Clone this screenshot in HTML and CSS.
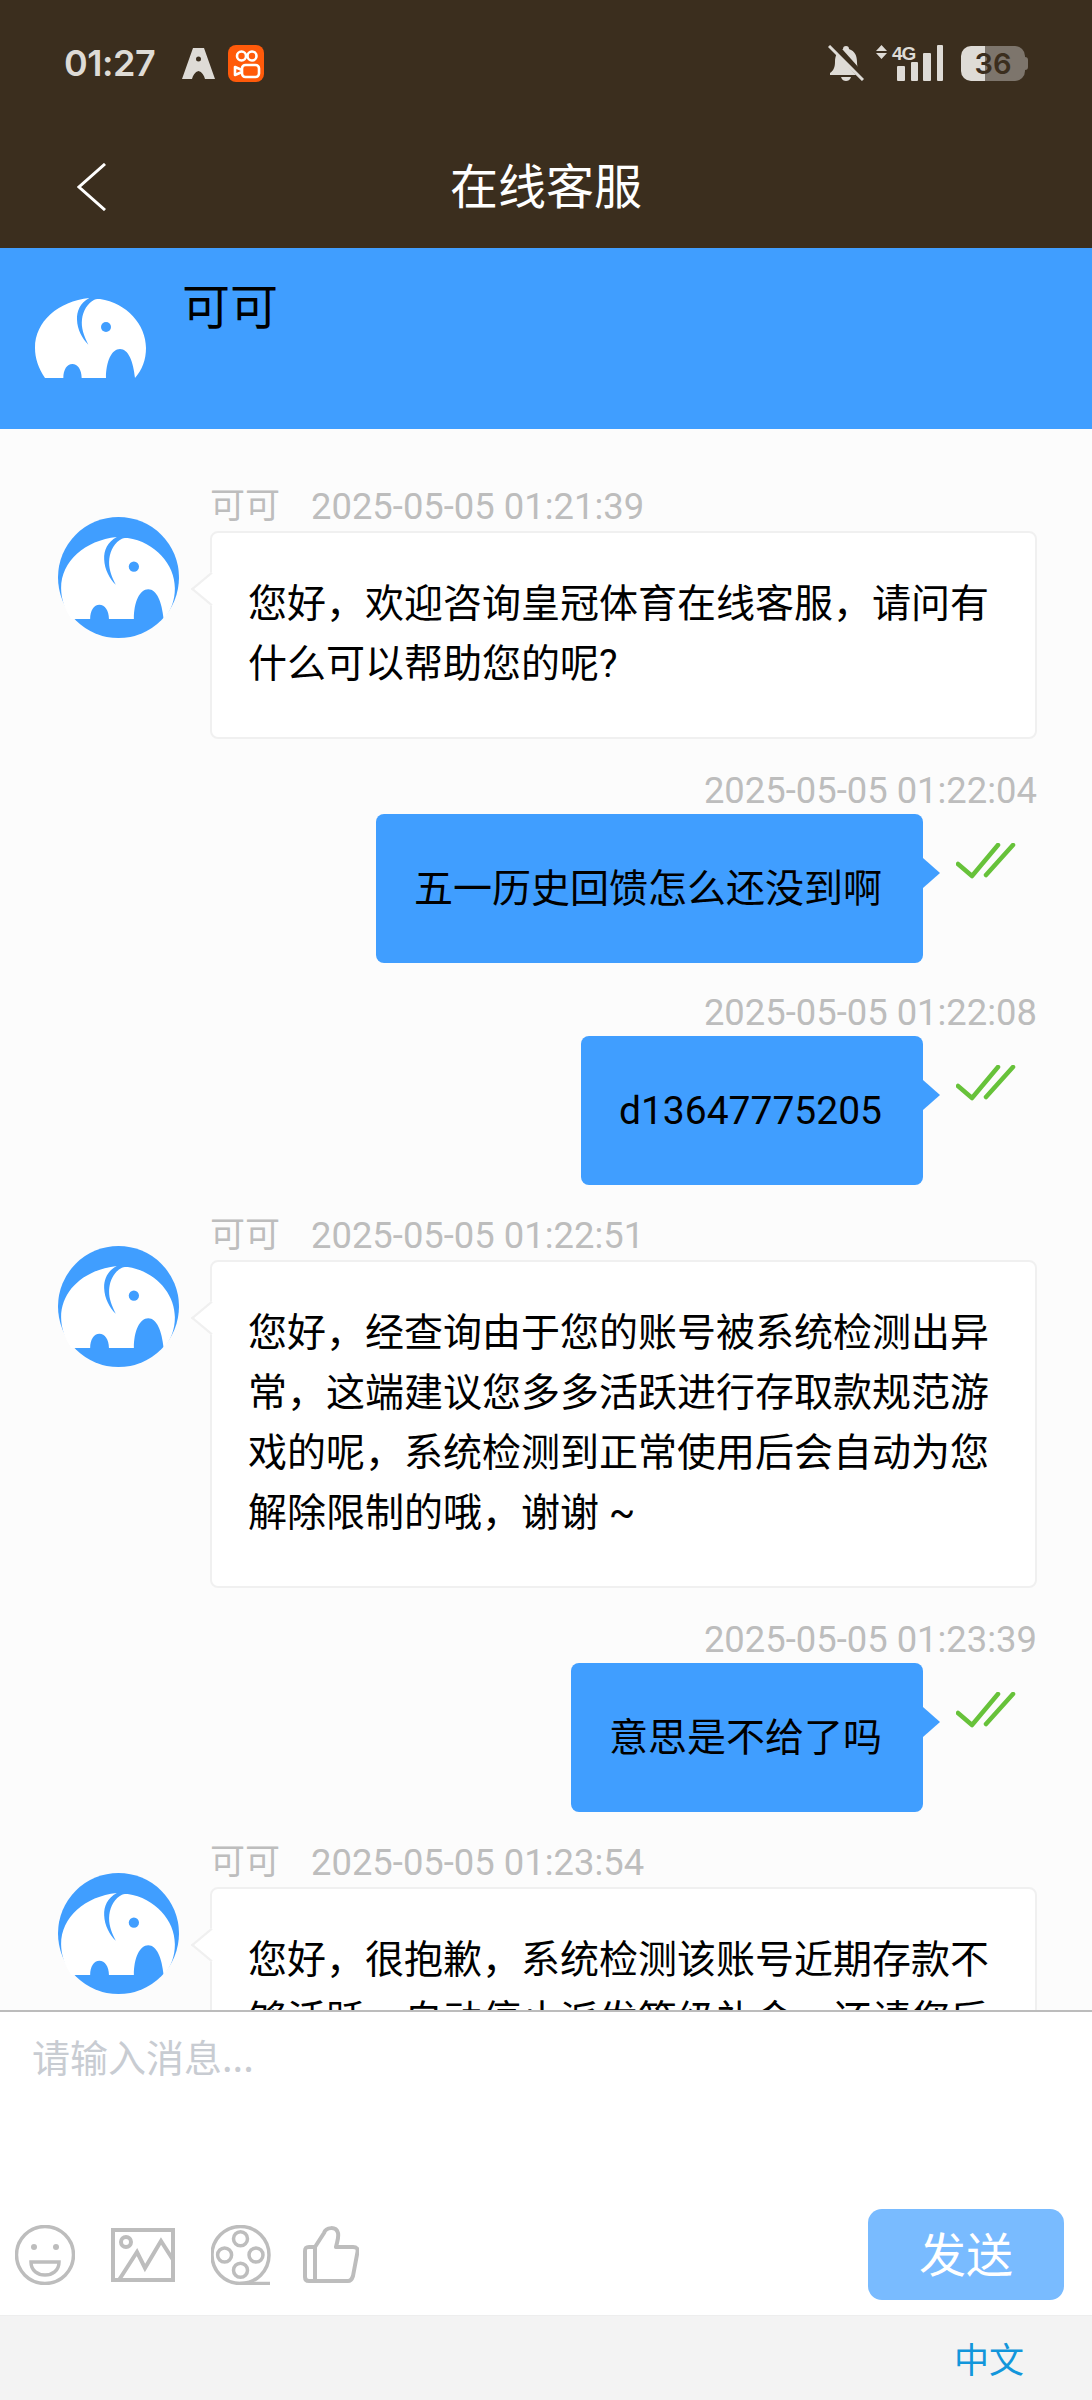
FILE: index.html
```html
<!DOCTYPE html>
<html lang="zh-CN">
<head>
  <meta charset="UTF-8" />
  <meta name="viewport" content="width=device-width, initial-scale=1.0" />
  <title>在线客服</title>
  <link rel="stylesheet" href="styles.css">
</head>
<body>
  <svg class="defs">
    <symbol id="elephant" viewBox="0 0 333 240">
      <path fill="#fff" d="M30 240C10 210 0 180 0 150C0 70 70 10 163 0C135 15 125 40 126 65C127 95 142 122 160 140C146 112 138 90 141 64C144 38 158 15 178 5C184 3 190 3 195 3C275 15 333 80 333 150C333 185 322 215 300 240C295 190 280 153 255 153C230 153 213 190 213 240H140C140 215 128 198 112 198C96 198 85 215 85 240Z"/>
      <circle cx="213" cy="87" r="15" fill="#409eff"/>
    </symbol>
    <symbol id="ticks" viewBox="0 0 60 36">
      <path d="M2 21L16 33L42 2M30 32L57 2" fill="none" stroke="#67c23a" stroke-width="4.5" stroke-linecap="round" stroke-linejoin="round"/>
    </symbol>
  </svg>

  <header class="top">
    <div class="status-bar">
      <div class="status-left">
        <span class="clock">01:27</span>
        <svg class="app-a" viewBox="0 0 33 31"><path fill="#dedbd6" fill-rule="evenodd" d="M11 0H22L33 31H23C22 27 20 24 16.5 23C13 24 11 27 10 31H0ZM16.5 8.500A2.500 2.500 0 1 0 16.500 13.500A2.500 2.500 0 1 0 16.500 8.500Z"/></svg>
        <svg class="app-k" viewBox="0 0 36 37">
          <rect width="36" height="37" rx="8" fill="#ff5a0a"/>
          <g fill="none" stroke="#fff" stroke-width="2.600" stroke-linejoin="round">
            <circle cx="13.500" cy="11" r="4.500"/>
            <circle cx="24" cy="11" r="4.500"/>
            <rect x="14" y="20" width="17" height="12" rx="3.500"/>
            <path d="M14 25L7 22V30L14 27"/>
          </g>
        </svg>
      </div>
      <div class="status-right">
        <svg class="bell" viewBox="0 0 36 36">
          <path fill="#dedbd6" d="M18 1C20 1 21 2 21 4C27 6 29 11 29 17C29 23 31 26 34 28V30H2V28C5 26 7 23 7 17C7 11 9 6 15 4C15 2 16 1 18 1ZM13 32H23C22 35 20 36 18 36C16 36 14 35 13 32Z"/>
          <path d="M4 -2L38 36" stroke="#3b2e1e" stroke-width="7"/>
          <path d="M1 1L35 35" stroke="#dedbd6" stroke-width="3"/>
        </svg>
        <svg class="signal" viewBox="0 -4 67 44">
          <path fill="#dedbd6" d="M5.500 0L11 6H0ZM0 8H11L5.500 14Z"/>
          <text class="net-type" x="16" y="15">4G</text>
          <rect x="21" y="21" width="8" height="15" rx="1"/>
          <rect x="35" y="17" width="7" height="19" rx="1"/>
          <rect x="47" y="8" width="8" height="28" rx="1"/>
          <rect x="61" y="0" width="6" height="36" rx="1"/>
        </svg>
        <div class="battery">36</div>
      </div>
    </div>
    <nav class="nav-bar">
      <svg class="back" viewBox="0 0 29 48"><path d="M28 1L2 24L28 47" fill="none" stroke="#fff" stroke-width="3"/></svg>
      <h1 class="nav-title">在线客服</h1>
    </nav>
  </header>

  <section class="agent-bar">
    <svg class="agent-logo"><use href="#elephant"/></svg>
    <div class="agent-name">可可</div>
  </section>

  <main class="chat">
    <div class="msg msg-left">
      <svg class="avatar" viewBox="0 0 121 121"><circle cx="60.500" cy="60.500" r="60.500" fill="#409eff"/><use href="#elephant" x="3" y="20" width="114" height="82"/></svg>
      <div class="msg-body">
        <div class="meta"><span class="meta-name">可可</span><span>2025-05-05 01:21:39</span></div>
        <div class="bubble">您好，欢迎咨询皇冠体育在线客服，请问有什么可以帮助您的呢?</div>
      </div>
    </div>

    <div class="msg msg-right">
      <div class="meta">2025-05-05 01:22:04</div>
      <div class="bubble-row">
        <div class="bubble">五一历史回馈怎么还没到啊</div>
        <svg class="ticks"><use href="#ticks"/></svg>
      </div>
    </div>

    <div class="msg msg-right">
      <div class="meta">2025-05-05 01:22:08</div>
      <div class="bubble-row">
        <div class="bubble">d13647775205</div>
        <svg class="ticks"><use href="#ticks"/></svg>
      </div>
    </div>

    <div class="msg msg-left">
      <svg class="avatar" viewBox="0 0 121 121"><circle cx="60.500" cy="60.500" r="60.500" fill="#409eff"/><use href="#elephant" x="3" y="20" width="114" height="82"/></svg>
      <div class="msg-body">
        <div class="meta"><span class="meta-name">可可</span><span>2025-05-05 01:22:51</span></div>
        <div class="bubble">您好，经查询由于您的账号被系统检测出异常，这端建议您多多活跃进行存取款规范游戏的呢，系统检测到正常使用后会自动为您解除限制的哦，谢谢 ~</div>
      </div>
    </div>

    <div class="msg msg-right">
      <div class="meta">2025-05-05 01:23:39</div>
      <div class="bubble-row">
        <div class="bubble">意思是不给了吗</div>
        <svg class="ticks"><use href="#ticks"/></svg>
      </div>
    </div>

    <div class="msg msg-left">
      <svg class="avatar" viewBox="0 0 121 121"><circle cx="60.500" cy="60.500" r="60.500" fill="#409eff"/><use href="#elephant" x="3" y="20" width="114" height="82"/></svg>
      <div class="msg-body">
        <div class="meta"><span class="meta-name">可可</span><span>2025-05-05 01:23:54</span></div>
        <div class="bubble">您好，很抱歉，系统检测该账号近期存款不够活跃，自动停止派发等级礼金，还请您后</div>
      </div>
    </div>
  </main>

  <section class="composer">
    <div class="input-box">请输入消息...</div>
    <div class="toolbar">
      <svg class="tool" viewBox="0 0 60 60">
        <circle cx="30" cy="30" r="28.500"/>
        <circle class="dot" cx="19" cy="22" r="3"/>
        <circle class="dot" cx="41" cy="22" r="3"/>
        <path d="M16 37H44C44 46 37 50 30 50C23 50 16 46 16 37Z"/>
      </svg>
      <svg class="tool tool-wide" viewBox="0 0 64 54">
        <rect x="2" y="2" width="60" height="50"/>
        <circle cx="15" cy="14" r="5"/>
        <path d="M8 52L26 24L34 40L50 13L64 35"/>
      </svg>
      <svg class="tool" viewBox="0 0 60 60">
        <circle cx="29.500" cy="30" r="28.500"/>
        <circle cx="29.500" cy="13.700" r="7"/>
        <circle cx="13.600" cy="30" r="7"/>
        <circle cx="45" cy="30" r="7"/>
        <circle cx="29.500" cy="45.300" r="7"/>
        <path d="M29 58.500H59"/>
      </svg>
      <svg class="tool tool-thumb" viewBox="0 0 56 57">
        <path stroke-linejoin="round" d="M12 21L21 7C23 1 33 0 35 7C36 12 34 16 33 21H50C54 21 55 23 54.500 26L50 50C49 53 48 55 45 55H6C3 55 2 53 2 51V25C2 22 3 21 6 21ZM12 21V55"/>
      </svg>
      <button class="send-btn">发送</button>
    </div>
  </section>

  <footer class="lang-bar"><span class="lang">中文</span></footer>
</body>
</html>
```

FILE: styles.css
```css
* {
  margin: 0;
  padding: 0;
  box-sizing: border-box;
}

body {
  width: 1092px;
  height: 2400px;
  overflow: hidden;
  display: flex;
  flex-direction: column;
  font-family: Roboto, "Noto Sans CJK SC", sans-serif;
  background: #fff;
  color: #000;
}

.defs {
  display: none;
}

/* top dark area */
.top {
  background: #3b2e1e;
  height: 248px;
  flex-shrink: 0;
}

.status-bar {
  height: 126px;
  padding: 0 64px;
  display: flex;
  align-items: center;
  justify-content: space-between;
}

.status-left,
.status-right {
  display: flex;
  align-items: center;
}

.clock {
  font-family: Inter, sans-serif;
  font-size: 36px;
  font-weight: 600;
  letter-spacing: -0.5px;
  color: #dedbd6;
  width: 91px;
  margin-right: 27px;
}

.app-a {
  width: 33px;
  height: 31px;
  margin-right: 13px;
}

.app-k {
  width: 36px;
  height: 37px;
}

.bell {
  width: 36px;
  height: 36px;
  margin-right: 12px;
}

.signal {
  width: 67px;
  height: 44px;
  margin-right: 18px;
  fill: #dedbd6;
}

.net-type {
  font-family: "Liberation Sans", sans-serif;
  font-size: 19px;
  font-weight: 700;
  letter-spacing: -1px;
}

.battery {
  position: relative;
  width: 64px;
  height: 35px;
  margin-right: 3px;
  border-radius: 10px;
  background: linear-gradient(to right, #dedbd6 0, #dedbd6 24px, #7d756c 24px);
  color: #3b2e1e;
  font-family: Inter, sans-serif;
  font-size: 29px;
  font-weight: 600;
  line-height: 35px;
  text-align: center;
}

.battery::after {
  content: "";
  position: absolute;
  right: -3px;
  top: 11px;
  width: 3px;
  height: 13px;
  border-radius: 0 3px 3px 0;
  background: #7d756c;
}

.nav-bar {
  height: 122px;
  display: grid;
  grid-template-columns: 1fr auto 1fr;
  align-items: center;
}

.back {
  width: 29px;
  height: 48px;
  margin-left: 77px;
}

.nav-title {
  font-size: 48px;
  font-weight: 400;
  color: #fff;
  padding-bottom: 8px;
  font-family: "Noto Sans CJK SC", sans-serif;
}

/* agent header */
.agent-bar {
  height: 181px;
  flex-shrink: 0;
  background: #409eff;
  display: flex;
  align-items: flex-start;
  padding-left: 35px;
}

.agent-logo {
  width: 111px;
  height: 80px;
  margin-top: 50px;
  margin-right: 36px;
}

.agent-name {
  margin-top: 31px;
  font-size: 48px;
  line-height: 48px;
  font-family: "Noto Sans CJK SC", sans-serif;
}

/* messages */
.chat {
  flex: 1;
  min-height: 0;
  overflow: hidden;
  background: #fcfcfc;
  padding: 60px 55px 0 58px;
}

.msg-left {
  display: flex;
  align-items: flex-start;
  margin-bottom: 35px;
}

.msg-right {
  margin-bottom: 33px;
}

.avatar {
  width: 121px;
  height: 121px;
  margin-top: 28px;
  margin-right: 31px;
  flex-shrink: 0;
}

.msg-body {
  width: 827px;
}

.meta {
  font-size: 36.4px;
  color: #bdbdbd;
  white-space: nowrap;
}

.msg-left .meta {
  height: 36px;
  margin-bottom: 6px;
  line-height: 36px;
  display: flex;
  gap: 31px;
}

.meta-name {
  font-size: 35px;
}

.msg-right .meta {
  height: 33px;
  margin-bottom: 7px;
  line-height: 33px;
  text-align: right;
}

.bubble {
  position: relative;
  font-size: 39px;
  line-height: 60px;
  border-radius: 8px;
}

.msg-left .bubble {
  background: #fff;
  border: 2px solid #f0f0f0;
  padding: 41px 34px 43px 36px;
}

.msg-left .bubble::before {
  content: "";
  position: absolute;
  left: -13px;
  top: 44px;
  width: 22px;
  height: 22px;
  background: #fff;
  border-left: 2px solid #f0f0f0;
  border-bottom: 2px solid #f0f0f0;
  transform: scaleX(1.2) rotate(45deg);
}

.bubble-row {
  display: flex;
  justify-content: flex-end;
  align-items: flex-start;
}

.msg-right .bubble {
  background: #409eff;
  padding: 45px 41px 44px 38px;
}

.msg-right .bubble::after {
  content: "";
  position: absolute;
  right: -17px;
  top: 44px;
  border-left: 17px solid #409eff;
  border-top: 15px solid transparent;
  border-bottom: 15px solid transparent;
}

.ticks {
  width: 60px;
  height: 36px;
  margin: 29px 21px 0 33px;
  flex-shrink: 0;
}

/* input area */
.composer {
  height: 305px;
  flex-shrink: 0;
  border-top: 2px solid #bcbcbc;
  background: #fff;
  display: flex;
  flex-direction: column;
  justify-content: space-between;
  padding-bottom: 15px;
}

.input-box {
  padding: 24px 0 0 32px;
  font-size: 38px;
  line-height: 40px;
  color: #c8ccd2;
  font-family: "Noto Sans CJK SC", sans-serif;
}

.toolbar {
  display: flex;
  align-items: center;
  gap: 36px;
  padding: 0 28px 0 15px;
}

.tool {
  width: 60px;
  height: 60px;
  flex-shrink: 0;
  fill: none;
  stroke: #bdbdbd;
  stroke-width: 3.500;
}

.tool .dot {
  fill: #bdbdbd;
  stroke: none;
}

.tool-wide {
  width: 64px;
  height: 54px;
  stroke-width: 4;
}

.tool-thumb {
  width: 56px;
  height: 57px;
  margin-left: -4px;
  stroke-width: 4;
}

.send-btn {
  margin-left: auto;
  width: 196px;
  height: 91px;
  padding-bottom: 6px;
  border: none;
  border-radius: 14px;
  background: #79bbff;
  color: #fff;
  font-family: "Noto Sans CJK SC", sans-serif;
  font-size: 47px;
}

.lang-bar {
  height: 85px;
  flex-shrink: 0;
  background: #f3f3f3;
  border-top: 1px solid #eeeeee;
  display: flex;
  align-items: center;
  justify-content: flex-end;
  padding-right: 68px;
  padding-bottom: 2px;
}

.lang {
  font-size: 35px;
  color: #1296db;
  font-family: "Noto Sans CJK SC", sans-serif;
}
```
